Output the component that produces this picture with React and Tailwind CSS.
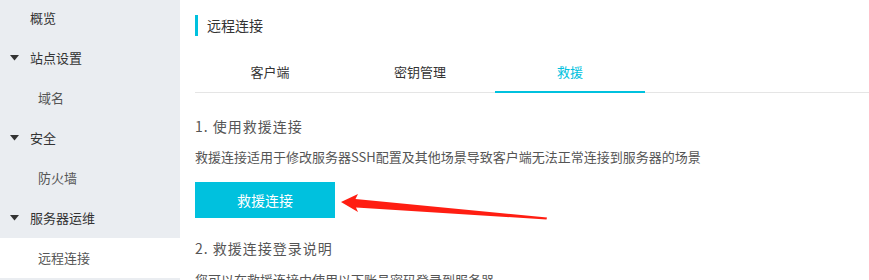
const menu = [
  { label: '概览', level: 0 },
  { label: '站点设置', level: 0, group: true },
  { label: '域名', level: 1 },
  { label: '安全', level: 0, group: true },
  { label: '防火墙', level: 1 },
  { label: '服务器运维', level: 0, group: true },
  { label: '远程连接', level: 1, active: true },
]

const tabs = ['客户端', '密钥管理', '救援']

function Caret() {
  return (
    <svg width="9" height="6" viewBox="0 0 9 6" className="mr-[11px] ml-[10px] shrink-0">
      <path d="M0 0H9L4.5 5.5Z" fill="#333" />
    </svg>
  )
}

function Sidebar() {
  return (
    <aside className="w-[180px] shrink-0 bg-[#eaedf1] h-[280px] overflow-hidden">
      <ul className="-mt-[2px]">
        {menu.map((item) => (
          <li
            key={item.label}
            className={
              'flex h-10 items-center text-[13px] ' +
              (item.active ? 'bg-white text-[#555] ' : '') +
              (item.level === 1 ? 'pl-[38px] text-[#555]' : item.group ? 'text-[#333]' : 'pl-[30px] text-[#333]')
            }
          >
            {item.group ? <Caret /> : null}
            {item.label}
          </li>
        ))}
      </ul>
    </aside>
  )
}

function RescueArrow() {
  return (
    <svg
      className="absolute left-[336px] top-[190px]"
      width="216"
      height="34"
      viewBox="0 0 216 34"
    >
      <path d="M5 12L22 4L19.5 9L211 27.5L210.5 29.5L20 17.5L22 22Z" fill="#ff1e12" />
    </svg>
  )
}

export default function App() {
  return (
    <div
      className="relative flex h-[280px] w-[869px] overflow-hidden bg-white"
      style={{ fontFamily: '"Noto Sans CJK SC", "Noto Sans", sans-serif' }}
    >
      <Sidebar />
      <main className="flex-1 pl-[15px]">
        <div className="mt-[15px] h-[21px] border-l-[3px] border-[#00c1de] pl-[9px] text-[14px] leading-[21px] text-[#333]">
          远程连接
        </div>

        <div className="mt-[17px] flex h-10 border-b border-[#e5e5e5]">
          {tabs.map((tab, i) => (
            <div
              key={tab}
              className={
                '-mb-px w-[150px] border-b-2 text-center text-[13px] leading-[38px] ' +
                (i === 2 ? 'border-[#00c1de] text-[#00c1de]' : 'border-transparent text-[#333]')
              }
            >
              {tab}
            </div>
          ))}
        </div>

        <h3 className="mt-[23px] text-[14px] leading-5 tracking-[1px] text-[#555]">1. 使用救援连接</h3>
        <p className="mt-[11px] text-[13px] leading-5 text-[#555]">
          救援连接适用于修改服务器SSH配置及其他场景导致客户端无法正常连接到服务器的场景
        </p>
        <button
          type="button"
          className="mt-[15px] h-9 w-[140px] bg-[#00c1de] text-[14px] text-white"
        >
          救援连接
        </button>
        <h3 className="mt-[20px] text-[14px] leading-5 tracking-[1px] text-[#555]">2. 救援连接登录说明</h3>
        <p className="mt-[12px] text-[13px] leading-5 text-[#555]">
          您可以在救援连接中使用以下账号密码登录到服务器
        </p>
      </main>
      <RescueArrow />
    </div>
  )
}
